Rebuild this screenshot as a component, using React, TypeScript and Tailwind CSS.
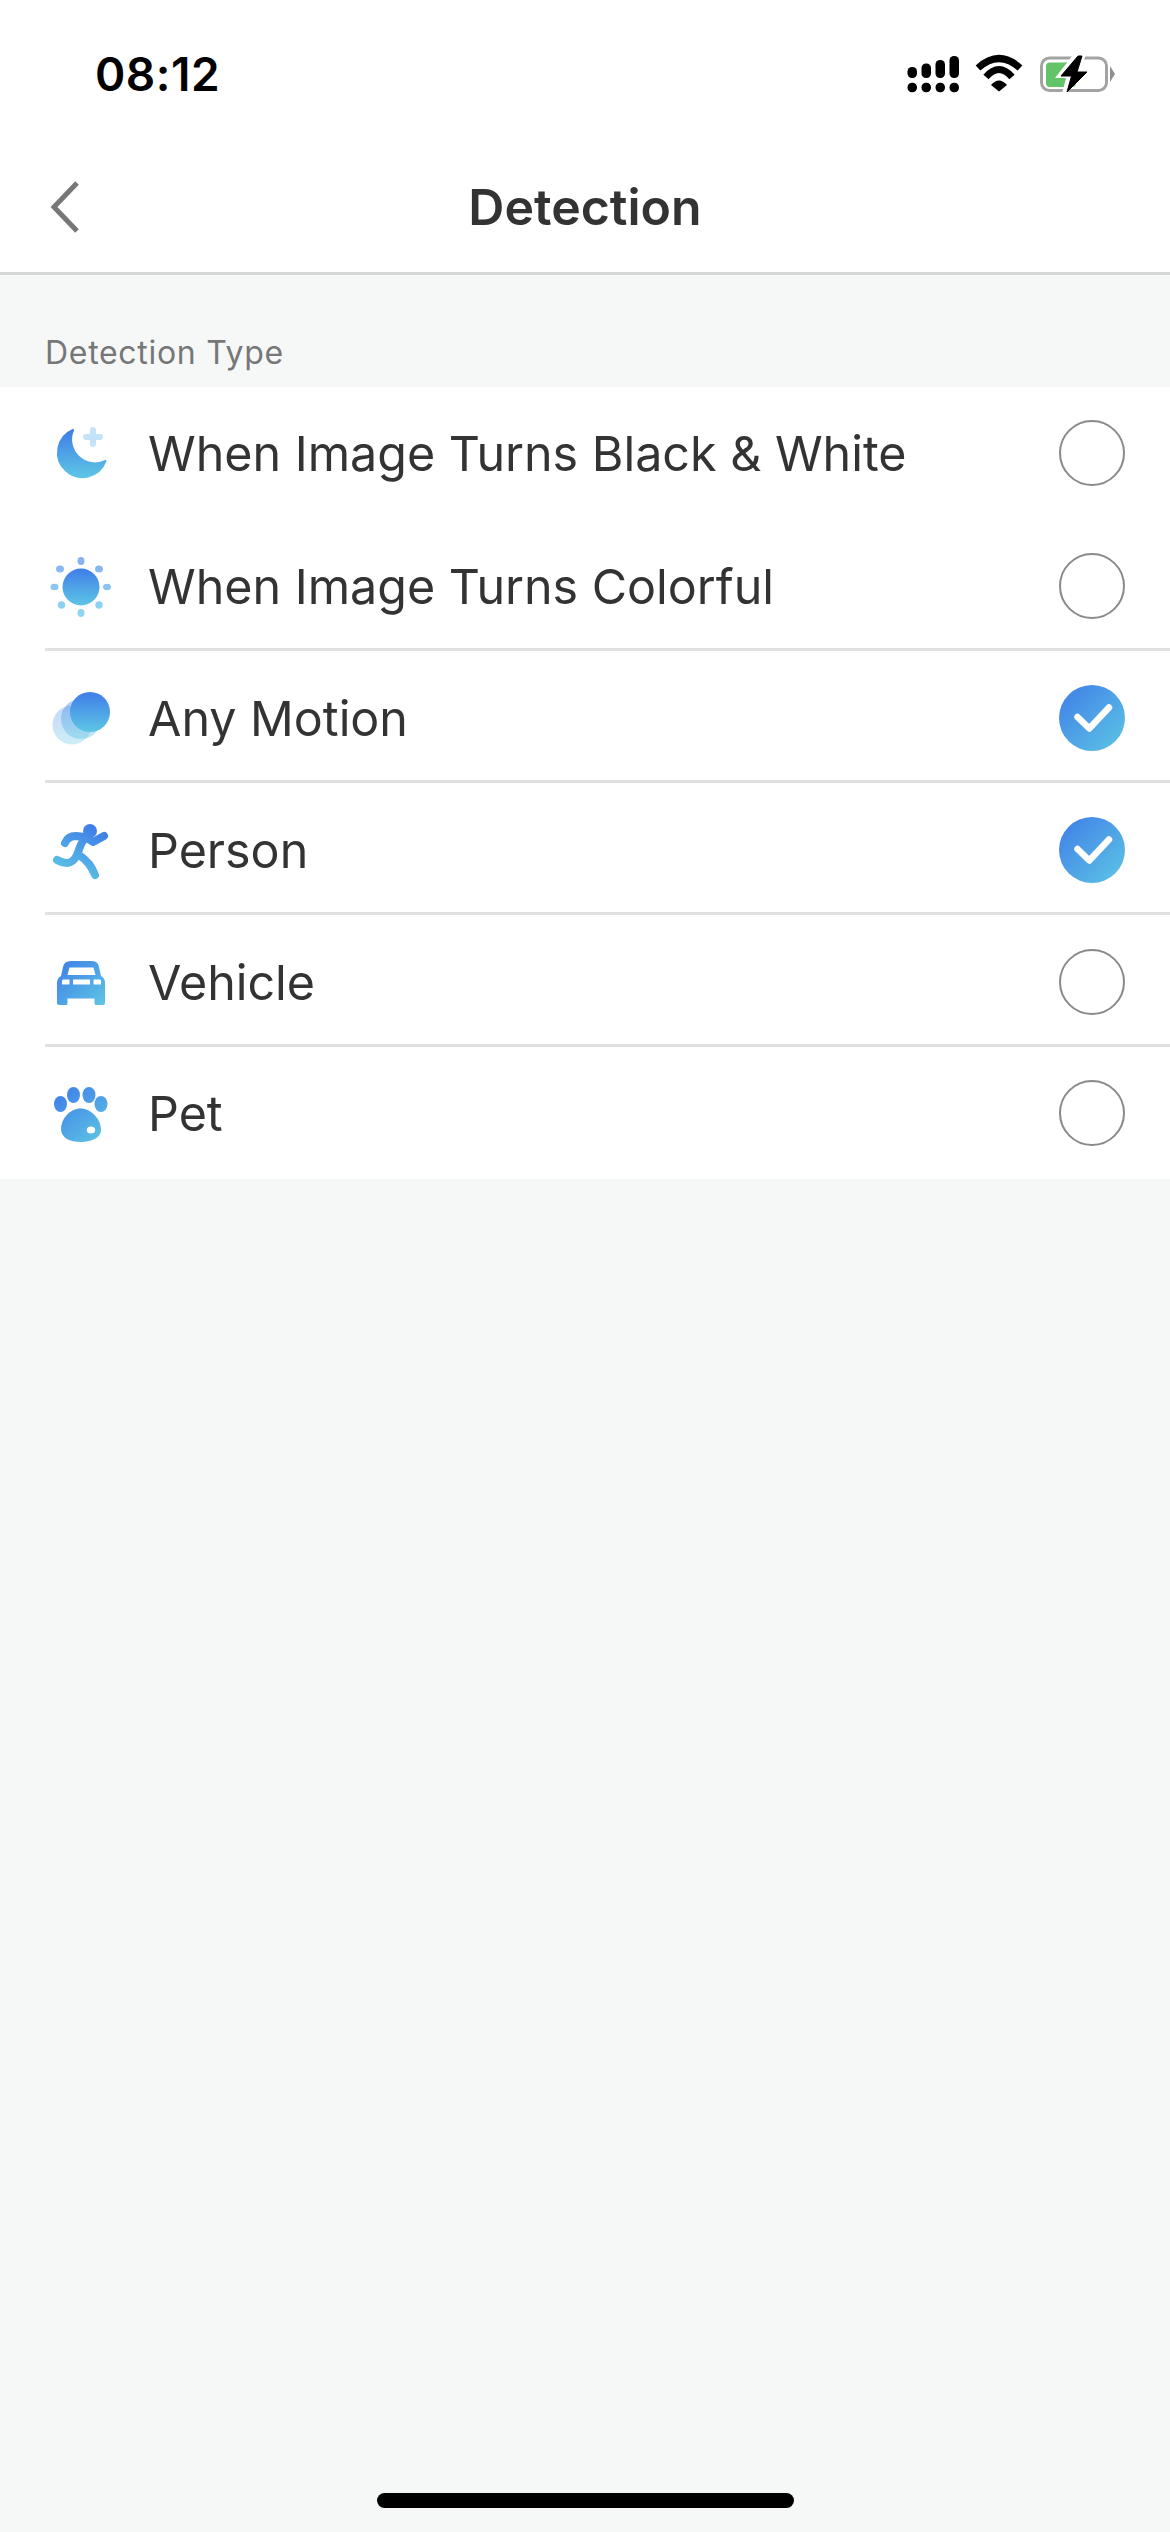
import type { ReactNode } from "react";

const font = { fontFamily: '"Inter", "Liberation Sans", sans-serif' };

function Grad({ id, diagonal }: { id: string; diagonal?: boolean }) {
  return (
    <defs>
      <linearGradient id={id} x1={diagonal ? "0" : "0.5"} y1="0" x2={diagonal ? "1" : "0.5"} y2="1">
        <stop offset="0" stopColor="#3f7de8" />
        <stop offset="1" stopColor="#5dc6e4" />
      </linearGradient>
    </defs>
  );
}

function Icon({ children }: { children: ReactNode }) {
  return (
    <svg viewBox="0 0 64 64" className="ml-[4px] h-[64px] w-[64px] shrink-0">
      {children}
    </svg>
  );
}

function MoonIcon() {
  return (
    <Icon>
      <Grad id="moon" />
      <path
        d="M24 9 A24.5 24.5 0 1 0 56.5 40 A24 24 0 0 1 24 9 Z"
        fill="url(#moon)"
        stroke="url(#moon)"
        strokeWidth="2"
        strokeLinejoin="round"
      />
      <path d="M44 9v14M37 16h14" stroke="#c5e3f8" strokeWidth="6" strokeLinecap="round" />
    </Icon>
  );
}

function SunIcon() {
  const rays = [
    [32, 7, 3.5, 4],
    [50, 15, 4, 3.5],
    [58, 33, 4, 3.2],
    [50, 51, 3.7, 3.7],
    [32, 59, 3.5, 4],
    [12.5, 51, 3.7, 3.7],
    [5.5, 33, 4, 3.2],
    [11, 15, 4, 3.5],
  ];
  return (
    <Icon>
      <defs>
        <linearGradient id="sunRay" gradientUnits="userSpaceOnUse" x1="32" y1="3" x2="32" y2="63">
          <stop offset="0" stopColor="#87b0f0" />
          <stop offset="1" stopColor="#8fd9ef" />
        </linearGradient>
      </defs>
      <Grad id="sun" />
      {rays.map(([cx, cy, rx, ry]) => (
        <ellipse key={`${cx}-${cy}`} cx={cx} cy={cy} rx={rx} ry={ry} fill="url(#sunRay)" />
      ))}
      <circle cx="32" cy="33" r="18.5" fill="url(#sun)" />
    </Icon>
  );
}

function MotionIcon() {
  return (
    <Icon>
      <Grad id="motion" />
      <circle cx="23" cy="39" r="19.5" fill="url(#motion)" opacity="0.3" />
      <circle cx="32" cy="33" r="20" fill="url(#motion)" opacity="0.4" />
      <circle cx="41" cy="26" r="20" fill="url(#motion)" />
    </Icon>
  );
}

function PersonIcon() {
  return (
    <Icon>
      <defs>
        <linearGradient id="person" gradientUnits="userSpaceOnUse" x1="42" y1="8" x2="18" y2="58">
          <stop offset="0" stopColor="#3f7de8" />
          <stop offset="1" stopColor="#5dc6e4" />
        </linearGradient>
      </defs>
      <circle cx="41" cy="13" r="7" fill="url(#person)" />
      <path
        d="M16 25 Q19 18 27 18 L36 19 Q38 20 44 24 L55 18 M36 19 Q31 27 28 37 Q24 45 18 45 Q13 45 8 42 M30 37 Q36 41 40 46 Q43 50 46 57"
        fill="none"
        stroke="url(#person)"
        strokeWidth="8"
        strokeLinecap="round"
        strokeLinejoin="round"
      />
    </Icon>
  );
}

function CarIcon() {
  return (
    <Icon>
      <Grad id="car" diagonal />
      <path
        fillRule="evenodd"
        fill="url(#car)"
        d="M22 11 H43 Q49 11 50 17 L52 26 Q56 28 56 33 V53 Q56 55 54 55 H47 Q45.5 55 45.5 53 V48.5 H18.5 V53 Q18.5 55 17 55 H10 Q8 55 8 53 V33 Q8 28 12 26 L14 17 Q15 11 22 11 Z M20.5 17.5 L18.5 25 H46.5 L44.5 17.5 Z M14 29.5 Q13 29.5 13 31 V34.5 H20.5 V29.5 Z M24 29.5 V34.5 H41 V29.5 Z M44.5 29.5 V34.5 H52 V31 Q52 29.5 51 29.5 Z"
      />
    </Icon>
  );
}

function PawIcon() {
  return (
    <Icon>
      <defs>
        <linearGradient id="paw" gradientUnits="userSpaceOnUse" x1="8" y1="8" x2="54" y2="62">
          <stop offset="0" stopColor="#3f7de8" />
          <stop offset="1" stopColor="#5dc6e4" />
        </linearGradient>
      </defs>
      <ellipse cx="11.5" cy="23" rx="6.5" ry="8" fill="url(#paw)" />
      <ellipse cx="24.5" cy="14" rx="6.5" ry="8" fill="url(#paw)" />
      <ellipse cx="40" cy="14" rx="6.5" ry="8" fill="url(#paw)" />
      <ellipse cx="52" cy="23" rx="6.5" ry="8" fill="url(#paw)" />
      <path
        d="M31.5 27.5 C42 27.5 52 38 52 49 C52 57 42 61 32 61 C21 61 12 57 12 48 C12 38 21 27.5 31.5 27.5 Z"
        fill="url(#paw)"
      />
      <ellipse cx="42" cy="49" rx="4.2" ry="3.6" fill="#fff" />
    </Icon>
  );
}

function Radio({ checked, id }: { checked: boolean; id: string }) {
  if (!checked) {
    return <div className="h-[66px] w-[66px] shrink-0 rounded-full border-2 border-[#8a8a8a]" />;
  }
  return (
    <svg viewBox="0 0 66 66" className="h-[66px] w-[66px] shrink-0">
      <Grad id={id} diagonal />
      <circle cx="33" cy="33" r="33" fill={`url(#${id})`} />
      <path
        d="M18.5 32 L30.3 43.5 L50 22.5"
        fill="none"
        stroke="#fff"
        strokeWidth="6.5"
        strokeLinecap="round"
        strokeLinejoin="round"
      />
    </svg>
  );
}

const rows = [
  { label: "When Image Turns Black & White", icon: <MoonIcon />, checked: false, line: false },
  { label: "When Image Turns Colorful", icon: <SunIcon />, checked: false, line: true },
  { label: "Any Motion", icon: <MotionIcon />, checked: true, line: true },
  { label: "Person", icon: <PersonIcon />, checked: true, line: true },
  { label: "Vehicle", icon: <CarIcon />, checked: false, line: true },
  { label: "Pet", icon: <PawIcon />, checked: false, line: false },
];

function StatusIcons() {
  return (
    <svg viewBox="905 50 210 48" className="h-[48px] w-[210px]">
      {[912, 926, 940, 954].map((x, i) => (
        <g key={x} fill="#000">
          <rect x={x - 4.5} y={[67, 63.5, 60, 56][i]} width="9.5" height={[11, 14.5, 18, 22][i]} rx="4.5" />
          <rect x={x - 4.5} y="82.7" width="9.5" height="9.6" rx="4.5" />
        </g>
      ))}
      <g fill="none" stroke="#000" strokeWidth="7">
        <path d="M978 68 Q999 49 1020 68" />
        <path d="M986 77 Q999 62 1012 77" />
      </g>
      <path d="M991 85 Q999 76 1007 85 L999 91.5 Z" fill="#000" />
      <rect x="1041.5" y="58" width="65" height="32.5" rx="8" fill="none" stroke="#a3a3a3" strokeWidth="3" />
      <path d="M1110 66 L1115 74 L1110 82 Z" fill="#8f8f8f" />
      <rect x="1046" y="62.5" width="30" height="24.5" rx="4" fill="#62c368" />
      <path d="M1076 51 L1055 78 H1066 L1061 97 L1092 69 H1081 L1087 51 Z" fill="#fff" />
      <path d="M1078 56 L1061 76 H1071.5 L1067 92 L1087 72 H1077 L1082 56 Z" fill="#000" stroke="#000" strokeWidth="1" />
    </svg>
  );
}

export default function App() {
  return (
    <div className="flex h-[2532px] w-[1170px] flex-col bg-[#f6f8f7]" style={font}>
      <div className="flex h-[141px] items-start justify-between bg-white pt-[50px] pr-[55px] pl-[95px]">
        <span className="text-[46px] leading-[48px] font-semibold tracking-[0.5px] text-black">08:12</span>
        <StatusIcons />
      </div>

      <header className="grid h-[134px] grid-cols-[1fr_auto_1fr] items-center border-b-[3px] border-[#d6d6d6] bg-white">
        <svg viewBox="0 0 30 52" className="ml-[50px] h-[52px] w-[30px]">
          <path d="M27 2 L4 26 L27 50" fill="none" stroke="#777" strokeWidth="5" />
        </svg>
        <h1 className="text-[50px] leading-[60px] font-semibold text-[#333]">Detection</h1>
        <div />
      </header>

      <div className="flex h-[112px] items-end pb-[14px] pl-[45px]">
        <span className="text-[32px] leading-[40px] tracking-[0.7px] text-[#777]">Detection Type</span>
      </div>

      <div className="bg-white">
        {rows.map((row, i) => (
          <div
            key={row.label}
            className={
              row.line
                ? "ml-[45px] flex h-[132px] items-center border-b-[3px] border-[#e0e0e0] pt-[5px] pr-[45px]"
                : "ml-[45px] flex h-[132px] items-center pr-[45px]"
            }
          >
            {row.icon}
            <span className="mt-[2px] ml-[35px] flex-1 text-[48.4px] leading-[60px] text-[#333]">{row.label}</span>
            <Radio checked={row.checked} id={`check${i}`} />
          </div>
        ))}
      </div>

      <div className="mt-auto mb-[24px] h-[15px] w-[417px] self-center rounded-full bg-black" />
    </div>
  );
}
